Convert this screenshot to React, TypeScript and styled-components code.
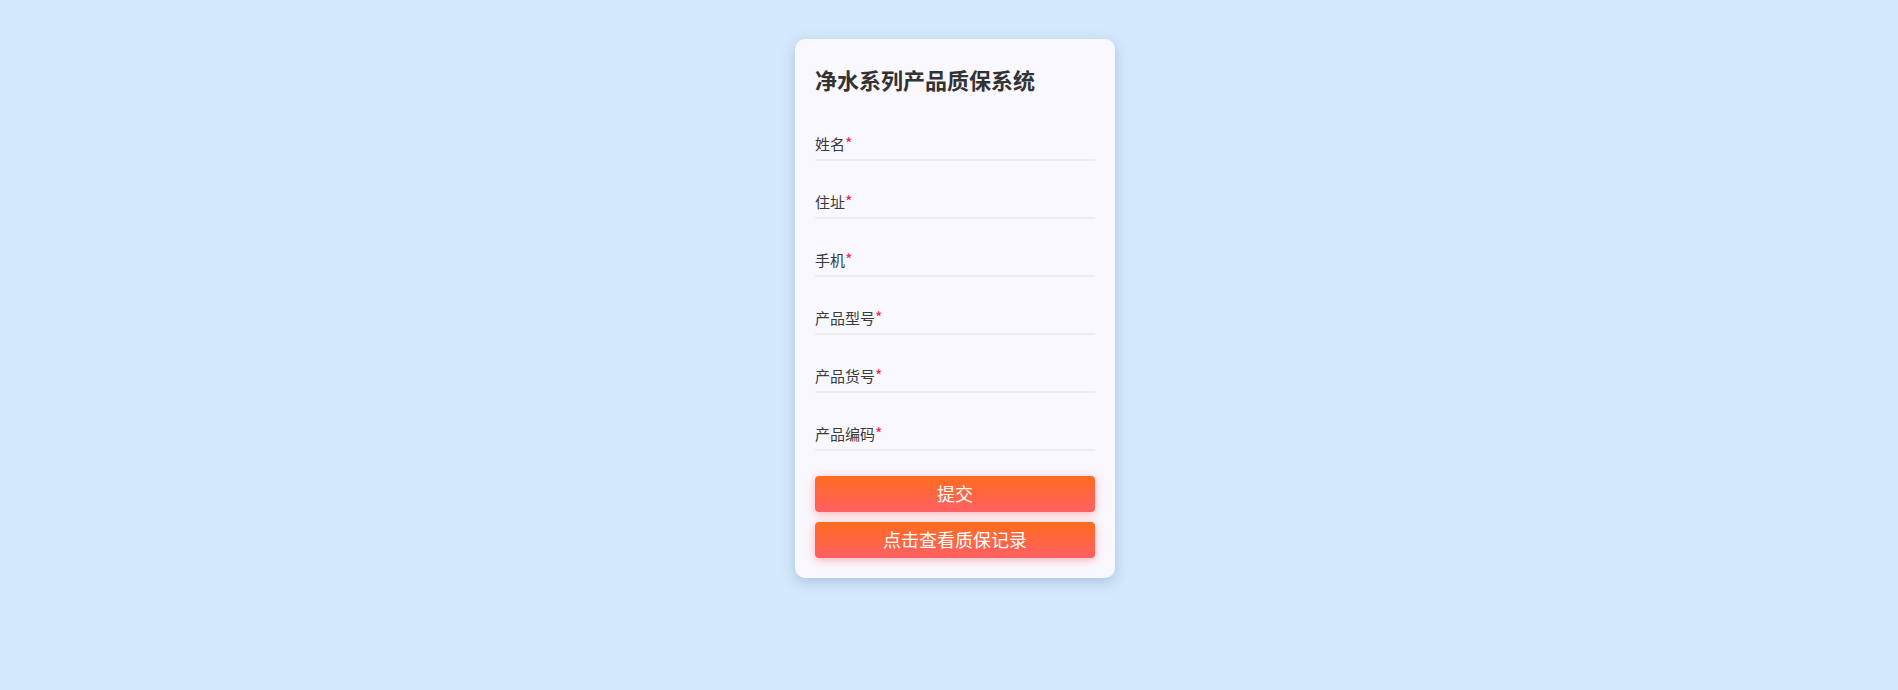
import styled, { createGlobalStyle } from "styled-components";

const GlobalStyle = createGlobalStyle`
  html, body {
    margin: 0;
    padding: 0;
    background: #d4e9fd;
    font-family: "Noto Sans CJK SC", "Noto Sans", sans-serif;
  }
`;

const Page = styled.div`
  min-height: 690px;
  display: flex;
  justify-content: center;
  align-items: flex-start;
  padding: 39px 0 0 12px;
  box-sizing: border-box;
`;

const Card = styled.div`
  width: 320px;
  box-sizing: border-box;
  padding: 20px;
  background: #f9f8fe;
  border-radius: 10px;
  box-shadow: 0 4px 14px rgba(120, 150, 180, 0.45);
`;

const Title = styled.h1`
  margin: 0;
  height: 44px;
  line-height: 40px;
  font-size: 22px;
  font-weight: 700;
  color: #333;
`;

const Field = styled.label`
  display: flex;
  align-items: flex-end;
  height: 58px;
  box-sizing: border-box;
  padding-bottom: 4px;
  border-bottom: 2px solid #eeeeee;
`;

const LabelText = styled.span`
  font-size: 15px;
  line-height: 22px;
  font-weight: 400;
  color: #3a3a3a;
  white-space: nowrap;

  em {
    font-style: normal;
    font-size: 16px;
    color: #ff1d4e;
  }
`;

const Input = styled.input`
  flex: 1;
  min-width: 0;
  border: none;
  outline: none;
  background: transparent;
  font: inherit;
  font-size: 15px;
  line-height: 22px;
  padding: 0 0 0 8px;
`;

const Actions = styled.div`
  display: flex;
  flex-direction: column;
  gap: 10px;
  margin-top: 25px;
`;

const Button = styled.button`
  height: 36px;
  padding: 0 0 3px;
  border: none;
  border-radius: 4px;
  background: linear-gradient(180deg, #ff6d1f 0%, #ff5f62 100%);
  box-shadow: 0 2px 8px rgba(255, 90, 90, 0.45);
  color: #fff;
  font-family: inherit;
  font-size: 18px;
  font-weight: 400;
  cursor: pointer;
`;

const fields = ["姓名", "住址", "手机", "产品型号", "产品货号", "产品编码"];

export default function App() {
  return (
    <>
      <GlobalStyle />
      <Page>
        <Card>
          <Title>净水系列产品质保系统</Title>
          {fields.map((f) => (
            <Field key={f}>
              <LabelText>
                {f}
                <em>*</em>
              </LabelText>
              <Input />
            </Field>
          ))}
          <Actions>
            <Button>提交</Button>
            <Button>点击查看质保记录</Button>
          </Actions>
        </Card>
      </Page>
    </>
  );
}
